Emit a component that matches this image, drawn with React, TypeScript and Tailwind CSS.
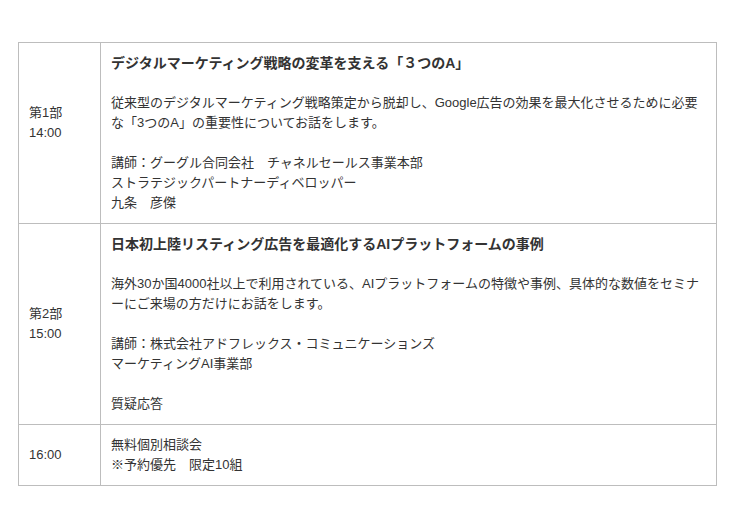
import React from "react";

const font = {
  fontFamily: '"Liberation Sans", "Noto Sans CJK JP", sans-serif',
};

export default function App() {
  return (
    <div className="bg-white w-[740px] h-[526px] pt-[42px] pl-[18px] text-[#333]" style={font}>
      <table className="border-collapse w-[699px] text-[13px] leading-[20px]">
        <tbody>
          <tr>
            <td className="border border-[#bdbdbd] w-[82px] align-middle pl-[10px] pr-2 py-[10px]">
              第1部
              <br />
              14:00
              <br />
              &nbsp;
            </td>
            <td className="border border-[#bdbdbd] align-top pl-[10px] pr-[10px] pt-[10px] pb-[10px]">
              <div className="font-bold text-[14px]">デジタルマーケティング戦略の変革を支える「３つのA」</div>
              <div>&nbsp;</div>
              <div>従来型のデジタルマーケティング戦略策定から脱却し、Google広告の効果を最大化させるために必要な「3つのA」の重要性についてお話をします。</div>
              <div>&nbsp;</div>
              <div>講師：グーグル合同会社　チャネルセールス事業本部</div>
              <div>ストラテジックパートナーディベロッパー</div>
              <div>九条　彦傑</div>
            </td>
          </tr>
          <tr>
            <td className="border border-[#bdbdbd] align-middle pl-[10px] pr-2 py-[10px]">
              第2部
              <br />
              15:00
            </td>
            <td className="border border-[#bdbdbd] align-top pl-[10px] pr-[10px] pt-[10px] pb-[10px]">
              <div className="font-bold text-[14px]">日本初上陸リスティング広告を最適化するAIプラットフォームの事例</div>
              <div>&nbsp;</div>
              <div>海外30か国4000社以上で利用されている、AIプラットフォームの特徴や事例、具体的な数値をセミナーにご来場の方だけにお話をします。</div>
              <div>&nbsp;</div>
              <div>講師：株式会社アドフレックス・コミュニケーションズ</div>
              <div>マーケティングAI事業部</div>
              <div>&nbsp;</div>
              <div>質疑応答</div>
            </td>
          </tr>
          <tr>
            <td className="border border-[#bdbdbd] align-middle pl-[10px] pr-2 py-[10px]">16:00</td>
            <td className="border border-[#bdbdbd] align-top pl-[10px] pr-[10px] pt-[10px] pb-[10px]">
              <div>無料個別相談会</div>
              <div>※予約優先　限定10組</div>
            </td>
          </tr>
        </tbody>
      </table>
    </div>
  );
}
